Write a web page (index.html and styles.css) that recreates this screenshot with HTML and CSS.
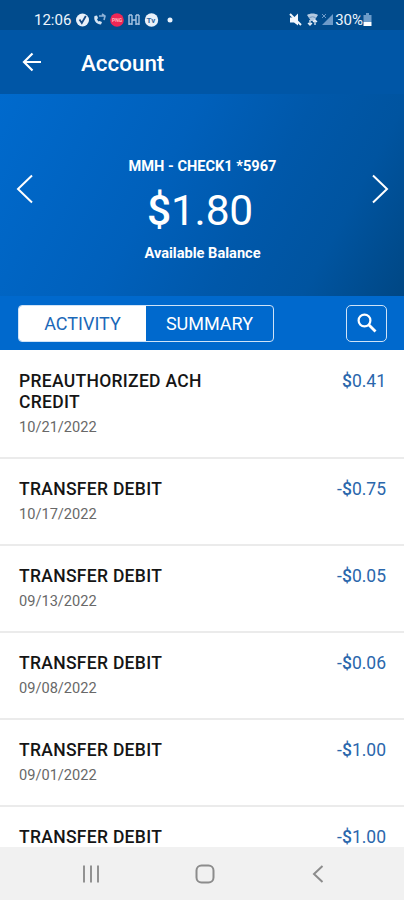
FILE: index.html
```html
<!DOCTYPE html>
<html lang="en">
<head>
    <meta charset="UTF-8">
    <title>Account</title>
    <link rel="stylesheet" href="styles.css">
</head>
<body>
    <div class="phone">
        <div class="status-bar">
            <span class="time">12:06</span>
            <svg class="left-icons" width="101" height="16" viewBox="0 0 101 16">
                <circle cx="6.5" cy="8" r="6.5" fill="#e9f1fa"/>
                <path d="M3.5 7.5l2.3 3.5 4-7" fill="none" stroke="#174b85" stroke-width="1.8"/>
                <path d="M18.500 4c-1 4 1 8 6.500 8.500l1-2.500-2.500-1-1 .5-1.500-2 1-1.500-1-2.500z" fill="#d5e4f3"/>
                <path d="M23 4h6m-3-2 3 2-1 4" fill="none" stroke="#8fb3d8" stroke-width="1.600"/>
                <circle cx="41" cy="8" r="6.800" fill="#ed2755"/>
                <text class="badge-text" x="36" y="10">PNG</text>
                <path d="M53 3v10M56 3v10M60 3v10M63 3v10M53 3h3m4 0h3M53 12h3m4 0h3M56 8h4" fill="none" stroke="#a9c5e2" stroke-width="1.400"/>
                <circle cx="75.500" cy="8" r="6.700" fill="#e9f1fa"/>
                <text class="badge-tv" x="70.500" y="11">Tv</text>
                <circle cx="94" cy="8" r="2.500" fill="#eaf3fc"/>
            </svg>
            <svg class="right-icons" width="46" height="16" viewBox="0 0 46 16">
                <path d="M1 5.500h4l4-4v12L5 10.500H1z" fill="#f4f8fd"/>
                <path d="M1 2l11 11" stroke="#f4f8fd" stroke-width="2"/>
                <path d="M18 3c3-2 8-2 11 0l-4 6h-3z" fill="#b3cae2"/>
                <path d="M20.500 5.500q3-1.500 6 0" fill="none" stroke="#6f97c0"/>
                <path d="M21 8v5m-2-2 2 2 2-2M26 13V8m-2 2 2-2 2 2" fill="none" stroke="#e5eef8" stroke-width="1.300"/>
                <path d="M44 2v11H33z" fill="#6e9bc9"/>
                <path d="M33 2l4 4m0-4-4 4" stroke="#6e9bc9"/>
            </svg>
            <span class="battery-level">30%</span>
            <svg class="battery" width="9" height="14" viewBox="0 0 9 14">
                <path d="M3 0h3v2h2.500v7H.5V2H3z" fill="#6c9bc9"/>
                <path d="M.5 9h8v4h-8z" fill="#fff"/>
            </svg>
        </div>

        <header class="header">
            <svg width="20" height="20" viewBox="0 0 20 20" fill="none" stroke="#fff" stroke-width="2.200">
                <path d="M19 10H2M10.500 1.500L2 10l8.500 8.500"/>
            </svg>
            <h1>Account</h1>
        </header>

        <section class="balance">
            <svg width="18" height="30" viewBox="0 0 18 30" fill="none" stroke="#fff" stroke-width="2">
                <path d="M16 1.500L2 15l14 13.500"/>
            </svg>
            <div class="balance-info">
                <div class="account-name">MMH - CHECK1 *5967</div>
                <div class="balance-amount"><span>$</span>1.80</div>
                <div class="balance-label">Available Balance</div>
            </div>
            <svg width="18" height="30" viewBox="0 0 18 30" fill="none" stroke="#fff" stroke-width="2">
                <path d="M2 1.500L16 15 2 28.500"/>
            </svg>
        </section>

        <nav class="toolbar">
            <div class="tabs">
                <button class="tab active">ACTIVITY</button>
                <button class="tab">SUMMARY</button>
            </div>
            <button class="search">
                <svg width="20" height="20" viewBox="0 0 20 20" fill="none" stroke="#fff">
                    <circle cx="7.500" cy="7.500" r="5.900" stroke-width="2.200"/>
                    <path d="M12 12l6.500 6.500" stroke-width="2.800"/>
                </svg>
            </button>
        </nav>

        <main class="transactions">
            <div class="transaction">
                <div class="details">
                    <h2>PREAUTHORIZED ACH CREDIT</h2>
                    <p>10/21/2022</p>
                </div>
                <div class="amount"><span>$</span>0.41</div>
            </div>
            <div class="transaction">
                <div class="details">
                    <h2>TRANSFER DEBIT</h2>
                    <p>10/17/2022</p>
                </div>
                <div class="amount">-<span>$</span>0.75</div>
            </div>
            <div class="transaction">
                <div class="details">
                    <h2>TRANSFER DEBIT</h2>
                    <p>09/13/2022</p>
                </div>
                <div class="amount">-<span>$</span>0.05</div>
            </div>
            <div class="transaction">
                <div class="details">
                    <h2>TRANSFER DEBIT</h2>
                    <p>09/08/2022</p>
                </div>
                <div class="amount">-<span>$</span>0.06</div>
            </div>
            <div class="transaction">
                <div class="details">
                    <h2>TRANSFER DEBIT</h2>
                    <p>09/01/2022</p>
                </div>
                <div class="amount">-<span>$</span>1.00</div>
            </div>
            <div class="transaction">
                <div class="details">
                    <h2>TRANSFER DEBIT</h2>
                </div>
                <div class="amount">-<span>$</span>1.00</div>
            </div>
        </main>

        <!-- Android navigation -->
        <footer class="system-nav">
            <svg width="20" height="20" viewBox="0 0 20 20" fill="none" stroke="#929292" stroke-width="2">
                <path d="M3 1.500v17M10 1.500v17M17 1.500v17"/>
            </svg>
            <svg width="20" height="20" viewBox="0 0 20 20" fill="none" stroke="#8c8c8c" stroke-width="2">
                <rect x="1.500" y="1.500" width="17" height="17" rx="5"/>
            </svg>
            <svg width="20" height="20" viewBox="0 0 20 20" fill="none" stroke="#8c8c8c" stroke-width="2">
                <path d="M14.500 2L6 10l8.500 8"/>
            </svg>
        </footer>
    </div>
</body>
</html>
```
FILE: styles.css
```css
* {
    box-sizing: border-box;
}

body {
    margin: 0;
    font-family: Roboto, "Liberation Sans", sans-serif;
}

h1, h2, p {
    margin: 0;
}

svg {
    display: block;
    flex-shrink: 0;
}

button {
    font-family: inherit;
    padding: 0;
}

.phone {
    display: flex;
    flex-direction: column;
    height: 900px;
    background: #fff;
    overflow: hidden;
}

.status-bar {
    display: flex;
    align-items: center;
    flex-shrink: 0;
    height: 30px;
    padding: 9px 32px 0 34px;
    background: #014b8c;
    color: #eef5fc;
    font-size: 15px;
}

.time {
    width: 42px;
}

.right-icons {
    margin-left: auto;
}

.battery-level {
    margin-left: 0;
    font-size: 15px;
}

.badge-text {
    fill: #ffb5bb;
    font-size: 5px;
    font-weight: 700;
}

.badge-tv {
    fill: #31689f;
    font-size: 8px;
    font-weight: 700;
}

.header {
    display: flex;
    align-items: center;
    flex-shrink: 0;
    gap: 39px;
    height: 64px;
    padding-left: 22px;
    background: #0056a6;
    color: #fff;
}

.header h1 {
    font-size: 22.4px;
    font-weight: 500;
    line-height: 26px;
    padding-top: 1px;
}

.balance {
    display: flex;
    align-items: center;
    justify-content: space-between;
    flex-shrink: 0;
    height: 202px;
    padding: 0 15px 12px 16px;
    background: linear-gradient(118deg, #006acd 0%, #0060bb 40%, #0058aa 62%, #0054a0 80%, #004784 100%);
    color: #fff;
}

.balance-info {
    padding-top: 41px;
    text-align: center;
}

.account-name,
.balance-label {
    font-size: 14.6px;
    font-weight: 700;
    line-height: 20px;
}

.balance-amount {
    font-size: 42.5px;
    letter-spacing: -0.2px;
    line-height: 52px;
    margin: 9px 0 6px;
    padding-right: 5px;
}

.balance-amount span,
.amount span {
    font-weight: 500;
}

.toolbar {
    display: flex;
    align-items: center;
    justify-content: space-between;
    flex-shrink: 0;
    height: 54px;
    padding: 0 17px 0 18px;
    background: #0069cd;
}

.tabs {
    display: flex;
    width: 256px;
    height: 37px;
    border: 1px solid #cfe3f7;
    border-radius: 4px;
    overflow: hidden;
}

.tab {
    flex: 1;
    border: none;
    background: transparent;
    color: #fff;
    font-size: 18px;
}

.tab.active {
    background: #fff;
    color: #1b68b8;
}

.search {
    display: flex;
    align-items: center;
    justify-content: center;
    width: 41px;
    height: 37px;
    padding-left: 1px;
    border: 1px solid #cfe3f7;
    border-radius: 5px;
    background: transparent;
}

.transactions {
    flex: 1;
    min-height: 0;
    overflow: hidden;
}

.transaction {
    display: flex;
    justify-content: space-between;
    padding: 20.5px 18px 20px 19px;
    border-bottom: 2px solid #ebebeb;
}

.details {
    width: 210px;
}

.details h2 {
    color: #151515;
    font-size: 17.5px;
    font-weight: 500;
    letter-spacing: 0.3px;
    line-height: 21.5px;
}

.details p {
    margin-top: 4px;
    color: #686868;
    font-size: 14.6px;
    line-height: 19px;
}

.amount {
    color: #2b67ac;
    font-size: 17.5px;
    line-height: 21px;
}

.system-nav {
    display: flex;
    align-items: center;
    flex-shrink: 0;
    justify-content: space-between;
    height: 53px;
    padding: 0 76px 0 81px;
    background: #f1f1f1;
}
```
